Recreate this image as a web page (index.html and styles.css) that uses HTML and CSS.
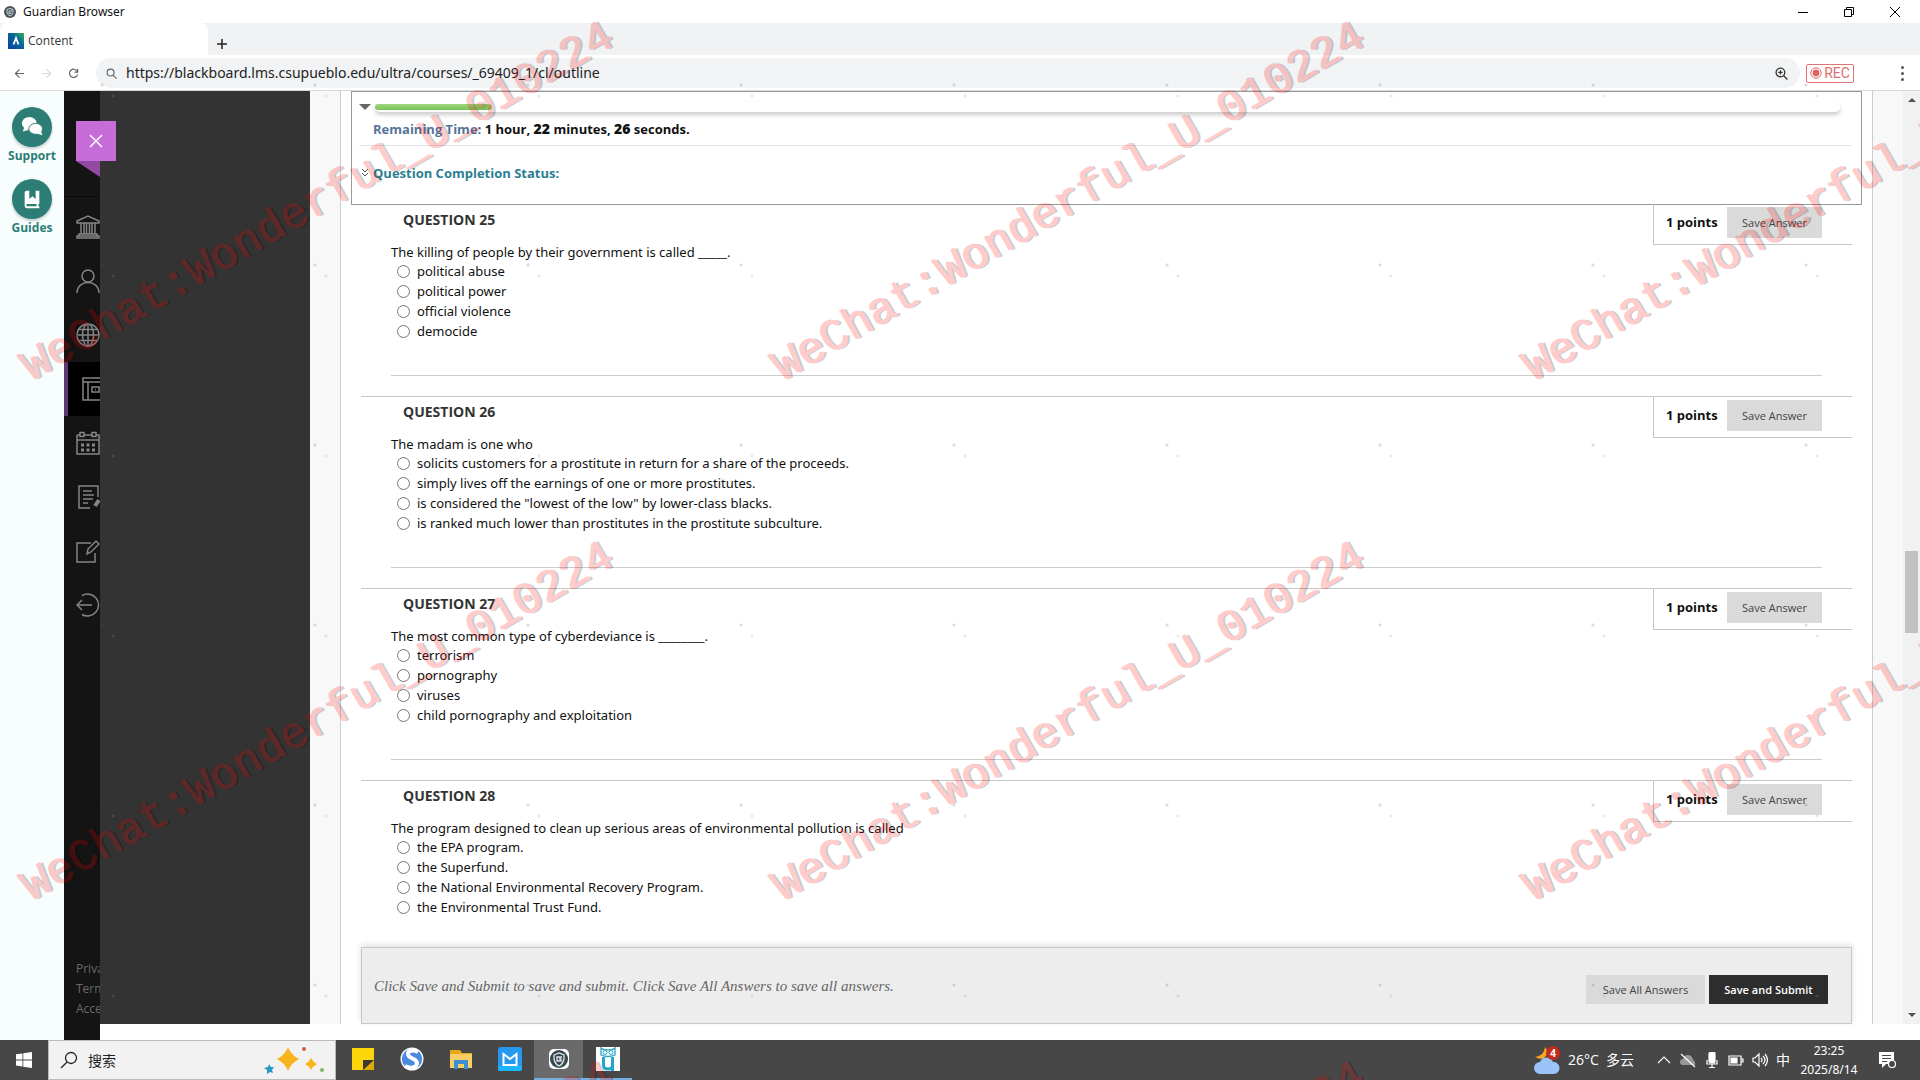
FILE: index.html
```html
<!DOCTYPE html>
<html lang="en">
<head>
<meta charset="utf-8">
<title>Guardian Browser</title>
<link rel="stylesheet" href="styles.css">
</head>
<body>
<header class="titlebar">
  <svg class="app-icon" viewBox="0 0 12 12"><circle cx="6" cy="6" r="6" fill="#46545c"/><path d="M3 3.500l3-1 3 1v3Q8.500 9 6 10 3.500 9 3 6.500zM8 5H5v2.500h2V6.500" fill="none" stroke="#cfd8dc" stroke-width="1"/></svg>
  <span class="app-name">Guardian Browser</span>
  <div class="window-controls">
    <button aria-label="Minimize"><svg viewBox="0 0 12 12"><path d="M1 6.500h10"/></svg></button>
    <button aria-label="Restore"><svg viewBox="0 0 12 12"><path d="M1.500 3.500h7v7h-7zM3.500 3.500v-2h7v7h-2"/></svg></button>
    <button aria-label="Close"><svg viewBox="0 0 12 12"><path d="M1 1l10 10M11 1L1 11"/></svg></button>
  </div>
</header>
<div class="tabstrip">
  <div class="tab">
    <svg class="favicon" viewBox="0 0 16 16"><defs><linearGradient id="fav" x1="0" y1="1" x2="1" y2="0"><stop offset="0" stop-color="#0b3fa0"/><stop offset=".6" stop-color="#06699a"/><stop offset="1" stop-color="#3bb54a"/></linearGradient></defs><path fill="url(#fav)" d="M0 0h16v16H0z"/><path d="M5.500 11.500L8 5l2.500 6.500" fill="none" stroke="#fff" stroke-width="1.800"/></svg>
    <span>Content</span>
  </div>
  <button class="new-tab" aria-label="New tab"><svg viewBox="0 0 12 12"><path d="M6 1v10M1 6h10"/></svg></button>
</div>
<nav class="toolbar" aria-label="Browser">
  <button class="tool" aria-label="Back"><svg viewBox="0 0 12 12"><path d="M11 6H1.500M6 1.500L1.500 6 6 10.500"/></svg></button>
  <button class="tool disabled" aria-label="Forward"><svg viewBox="0 0 12 12"><path d="M1 6h9.500M6 1.500L10.500 6 6 10.500"/></svg></button>
  <button class="tool" aria-label="Reload"><svg viewBox="0 0 12 12"><path d="M10 3.500A4.500 4.500 0 1 0 10.500 7M10.500 1v3.500H7"/></svg></button>
  <div class="address">
    <svg viewBox="0 0 12 12"><circle cx="5" cy="5" r="3.800"/><path d="M8 8l3.500 3.500"/></svg>
    <input type="text" aria-label="Address" value="https://blackboard.lms.csupueblo.edu/ultra/courses/_69409_1/cl/outline">
    <svg class="zoomed" viewBox="0 0 12 12"><circle cx="5" cy="5" r="4"/><path d="M8 8l3.500 3.500M5 3v4M3 5h4"/></svg>
  </div>
  <button class="rec"><svg viewBox="0 0 12 12"><circle cx="6" cy="6" r="5.200" fill="none" stroke="#e06c6c"/><circle cx="6" cy="6" r="3.400" fill="#dd6262"/></svg>REC</button>
  <button class="more" aria-label="Menu"><i></i><i></i><i></i></button>
</nav>
<div class="workspace">
  <aside class="help">
    <a href="#support"><span class="disc"><svg viewBox="0 0 24 24"><ellipse cx="9" cy="8" rx="8" ry="7"/><path d="M2 17l2-6 5 4z"/><ellipse cx="16" cy="14" rx="7.500" ry="6" stroke="#2b7d76"/><path d="M17 19l6.500 2-2-5z"/></svg></span>Support</a>
    <a href="#guides"><span class="disc"><svg viewBox="0 0 24 24"><path fill-rule="evenodd" d="M6 3h3v9l3.500-3 3.500 3V3h4v14.500h-1V20h1v2H7a3 3 0 0 1-3-3V5a2 2 0 0 1 2-2zM7 17.500a1.200 1.200 0 0 0 0 2.500h10v-2.500z"/></svg></span>Guides</a>
  </aside>
  <nav class="rail" aria-label="Main">
    <div class="rail-items">
      <a href="#institution" aria-label="Institution"><svg viewBox="0 0 24 24"><path d="M1 6l11-5 11 5v2H1zM3 19h18v2H3zM1 21h22v2H1zM5 8v11M8 8v11M10.500 8v11M13.500 8v11M16 8v11M19 8v11"/></svg></a>
      <a href="#profile" aria-label="Profile"><svg viewBox="0 0 24 24"><circle cx="12" cy="7" r="6"/><path d="M1 24C1 10 23 10 23 24"/></svg></a>
      <a href="#activity" aria-label="Activity"><svg viewBox="0 0 24 24"><circle cx="12" cy="12" r="11"/><ellipse cx="12" cy="12" rx="5.500" ry="11"/><path d="M12 1v22M1 12h22M3 6.500h18M3 17.500h18"/></svg></a>
      <a href="#courses" class="current" aria-label="Courses"><svg viewBox="0 0 24 24"><path d="M1 1h22v22H1zM1 5h22M6 5v18M10 10h7v5h-7zM13 12.500h1"/></svg></a>
      <a href="#calendar" aria-label="Calendar"><svg viewBox="0 0 24 24"><path d="M1 4h3M8 4h8M20 4h3v19H1V4M1 9h22M4 1.500h4v4H4zM16 1.500h4v4h-4z"/><path d="M5 14h14M5 19h14" stroke-width="3" stroke-dasharray="3 2.500"/></svg></a>
      <a href="#grades" aria-label="Grades"><svg viewBox="0 0 24 24"><path d="M14 23H3V1h19v11M7 6h9M7 10h11M7 14h10M7 18h5"/><path d="M19 21l4-6" stroke-width="4"/></svg></a>
      <a href="#tools" aria-label="Tools"><svg viewBox="0 0 24 24"><path d="M15 4H1v19h18v-9M11 15l1-5 8-8 3 3-8 8z"/></svg></a>
      <a href="#signout" aria-label="Sign out"><svg viewBox="0 0 24 24"><path d="M6 2.500a11 11 0 1 1 0 19M16 12H1M6 7l-5 5 5 5"/></svg></a>
    </div>
    <div class="rail-links"><a href="#privacy">Privacy</a><a href="#terms">Terms</a><a href="#accessibility">Accessibility</a></div>
    <button class="panel-close" aria-label="Close panel"><svg viewBox="0 0 14 14"><path d="M1 1l12 12M13 1L1 13"/></svg></button>
    <i class="fold"></i>
  </nav>
  <div class="backdrop"></div>
  <main class="exam">
    <section class="status">
      <div class="progress-row"><i class="caret"></i><div class="track"><div class="fill" style="width:8%"></div></div></div>
      <p class="remaining"><span>Remaining Time:</span> 1 hour, <b>22</b> minutes, <b>26</b> seconds.</p>
      <a class="completion" href="#status"><svg viewBox="0 0 8 10"><path d="M1 1l3 3 3-3M1 5l3 3 3-3"/></svg>Question Completion Status:</a>
    </section>
    <form class="questions">
      <fieldset class="question">
        <div class="points"><strong>1 points</strong><button type="button">Save Answer</button></div>
        <h2>QUESTION 25</h2>
        <p>The killing of people by their government is called _____.</p>
        <label><input type="radio" name="q25">political abuse</label>
        <label><input type="radio" name="q25">political power</label>
        <label><input type="radio" name="q25">official violence</label>
        <label><input type="radio" name="q25">democide</label>
        <hr>
      </fieldset>
      <fieldset class="question">
        <div class="points"><strong>1 points</strong><button type="button">Save Answer</button></div>
        <h2>QUESTION 26</h2>
        <p>The madam is one who</p>
        <label><input type="radio" name="q26">solicits customers for a prostitute in return for a share of the proceeds.</label>
        <label><input type="radio" name="q26">simply lives off the earnings of one or more prostitutes.</label>
        <label><input type="radio" name="q26">is considered the "lowest of the low" by lower-class blacks.</label>
        <label><input type="radio" name="q26">is ranked much lower than prostitutes in the prostitute subculture.</label>
        <hr>
      </fieldset>
      <fieldset class="question">
        <div class="points"><strong>1 points</strong><button type="button">Save Answer</button></div>
        <h2>QUESTION 27</h2>
        <p>The most common type of cyberdeviance is ________.</p>
        <label><input type="radio" name="q27">terrorism</label>
        <label><input type="radio" name="q27">pornography</label>
        <label><input type="radio" name="q27">viruses</label>
        <label><input type="radio" name="q27">child pornography and exploitation</label>
        <hr>
      </fieldset>
      <fieldset class="question">
        <div class="points"><strong>1 points</strong><button type="button">Save Answer</button></div>
        <h2>QUESTION 28</h2>
        <p>The program designed to clean up serious areas of environmental pollution is called</p>
        <label><input type="radio" name="q28">the EPA program.</label>
        <label><input type="radio" name="q28">the Superfund.</label>
        <label><input type="radio" name="q28">the National Environmental Recovery Program.</label>
        <label><input type="radio" name="q28">the Environmental Trust Fund.</label>
      </fieldset>
      <div class="submit-bar">
        <em>Click Save and Submit to save and submit. Click Save All Answers to save all answers.</em>
        <button type="button">Save All Answers</button>
        <button type="button" class="primary">Save and Submit</button>
      </div>
    </form>
  </main>
  <div class="scrollbar"><i class="up"></i><div class="groove"><div class="thumb"></div></div><i class="down"></i></div>
</div>
<footer class="taskbar">
  <button class="start" aria-label="Start"><svg viewBox="0 0 16 16"><path fill="#fff" d="M0 2.300l6.500-.9v6.100H0zM7.300 1.300L16 0v7.500H7.300zM0 8.400h6.500v6.100L0 13.600zM7.300 8.400H16V16l-8.700-1.300z"/></svg></button>
  <div class="search">
    <svg class="lens" viewBox="0 0 18 18"><circle cx="11" cy="7" r="5.500"/><path d="M7 11l-6 6"/></svg>
    <input type="text" aria-label="搜索" placeholder="搜索">
    <svg class="sparkles" viewBox="0 0 62 28"><path fill="#f7b51b" d="M24 1q3 8 11 12-8 4-11 12-3-8-11-12 8-4 11-12zM47 12q2 4 6 6-4 2-6 6-2-4-6-6 4-2 6-6z"/><path fill="#2899c0" d="M5 18l2 3 3 0-2 3 1 3-3-1-3 2v-4l-3-2 4-1z"/><circle cx="40" cy="3" r="2" fill="#dd5a43"/><circle cx="58" cy="24" r="2" fill="#7fb96a"/></svg>
  </div>
  <div class="apps">
    <button aria-label="Sticky Notes"><svg viewBox="0 0 24 24"><path fill="#fcd60a" d="M1 1h22v12H12v10H1z"/><path fill="#3c3a35" d="M12 13h11L12 23z"/><path fill="#e0ac00" d="M12 23l11-10v10z"/></svg></button>
    <button aria-label="Sogou"><svg viewBox="0 0 24 24"><circle cx="12" cy="12" r="11.500" fill="#fff"/><circle cx="12" cy="12" r="10.200" fill="#4a8be0"/><path d="M18 5C12 2 8 4 8 7c0 5 9 4 9 9 0 5-7 6-12 3" fill="none" stroke="#fff" stroke-width="4"/></svg></button>
    <button aria-label="File Explorer"><svg viewBox="0 0 24 24"><path fill="#e5a91c" d="M1 3h10l2 3h10v5H1z"/><path fill="#f9ce64" d="M1 7h22v14H1z"/><path fill="#3c8fd4" d="M5 13h14v9h-4v-5H9v5H5z"/></svg></button>
    <button aria-label="Mail"><svg viewBox="0 0 24 24"><rect width="24" height="24" rx="3" fill="#2599f0"/><path fill="#1cb5fb" d="M0 19h24v3a2 2 0 0 1-2 2H2a2 2 0 0 1-2-2z"/><path d="M5.500 18V7L12 12l6.500-5v11z" fill="none" stroke="#fff" stroke-width="2"/></svg></button>
    <button class="active" aria-label="Guardian Browser"><svg viewBox="0 0 24 24"><rect x="2" y="2" width="20" height="20" rx="5" fill="#fff"/><circle cx="12" cy="12" r="9" fill="#37474f"/><path d="M7 8l5-2 5 2v4q-1 5-5 7-4-2-5-7zM15 10h-5v4h4v-2h-2" fill="none" stroke="#e3e8ea" stroke-width="1.300"/></svg></button>
    <button class="running" aria-label="Owl"><svg viewBox="0 0 24 24"><path fill="#fff" d="M0 0h24v24H0z"/><g fill="none" stroke="#27a5c6"><path d="M5 1q2 2 7 2t7-2v7q-7 3-14 0z" stroke-width="1.300"/><circle cx="9" cy="5.500" r="2"/><circle cx="15" cy="5.500" r="2"/><path d="M7.500 10v8q0 4 4.500 4t4.500-4v-8" stroke-width="3"/><path d="M16.500 18v6" stroke-width="3"/></g></svg></button>
  </div>
  <div class="tray">
    <svg class="weather" viewBox="0 0 26 28"><path fill="#f6a823" d="M11 1q5 6-1 11-4 2-9-1 9-1 10-10z"/><path fill="#9cc4f8" d="M6 28a6 6 0 0 1 0-12 7 7 0 0 1 13 0 6 6 0 0 1 1 12z"/><circle cx="19" cy="7" r="7" fill="#c42b1c"/><text x="19" y="11" text-anchor="middle" font-size="10" font-weight="700" fill="#fff">4</text></svg>
    <span class="temp">26°C&nbsp; 多云</span>
    <svg viewBox="0 0 16 16"><path d="M2 11l6-6 6 6"/></svg>
    <svg viewBox="0 0 16 16"><path d="M3 13a3 3 0 0 1 0-6q2-6 8-3 2 2 2 4 3 2 2 5z" fill="#999" stroke="none"/><path d="M1 2l14 13"/></svg>
    <svg viewBox="0 0 16 16"><rect x="5" y="0" width="6" height="11" rx="2" fill="#fff"/><path d="M3 8v4h10V8M8 12v4M5 15.500h6"/></svg>
    <svg viewBox="0 0 16 16"><path d="M1 4h12v9H1zM13 7h2v3h-2"/><path fill="#fff" d="M3 6h6v5H3z"/></svg>
    <svg viewBox="0 0 16 16"><path d="M1 6h2l4-4v12l-4-4H1zM9 6q2 2 0 4M11 4q4 4 0 8M13 2q5 6 0 12"/></svg>
    <span class="ime">中</span>
    <time>23:25<br>2025/8/14</time>
    <svg class="notice" viewBox="0 0 18 18"><path fill="#fff" stroke="none" d="M1 1h15v12H8l-4 4v-4H1z"/><path d="M4 4.500h9M4 7.500h9M4 10.500h5" stroke="#474747"/><circle cx="14" cy="13" r="3.500" fill="#474747"/></svg>
  </div>
</footer>
<div class="watermarks" aria-hidden="true">
  <span>WeChat:Wonderful_U_010224</span><span>WeChat:Wonderful_U_010224</span><span>WeChat:Wonderful_U_010224</span>
  <span>WeChat:Wonderful_U_010224</span><span>WeChat:Wonderful_U_010224</span><span>WeChat:Wonderful_U_010224</span>
  <span>WeChat:Wonderful_U_010224</span><span>WeChat:Wonderful_U_010224</span><span>WeChat:Wonderful_U_010224</span>
</div>
</body>
</html>
```
FILE: styles.css
```css
* { box-sizing: border-box; }
body {
  margin: 0;
  height: 100vh;
  display: flex;
  flex-direction: column;
  position: relative;
  overflow: hidden;
  background: #fff;
  color: #111;
  font: 13px/20px "Open Sans", "Noto Sans CJK SC", sans-serif;
}
button { font: inherit; color: inherit; border: 0; background: none; padding: 0; }
a { color: inherit; text-decoration: none; }
svg { display: block; flex: none; fill: none; stroke-linecap: butt; }
p, h2 { margin: 0; }

/* browser chrome */
.titlebar { height: 23px; flex: none; display: flex; align-items: center; padding-left: 4px; gap: 7px; font-size: 12px; }
.app-name { font-family: "Noto Sans", sans-serif; }
.app-icon { width: 12px; height: 12px; }
.window-controls { margin-left: auto; display: flex; padding-right: 2px; }
.window-controls button { width: 46px; height: 20px; display: grid; place-items: center; }
.window-controls svg { width: 12px; height: 12px; stroke: #000; }
.tabstrip { height: 32px; flex: none; background: #f1f2f4; display: flex; align-items: center; }
.tab { width: 208px; height: 32px; background: #fff; border-radius: 8px 8px 0 0; display: flex; align-items: center; gap: 4px; padding: 3px 8px 0; font-size: 12px; color: #333; }
.favicon { width: 16px; height: 16px; }
.new-tab { width: 28px; height: 22px; display: grid; place-items: center; align-self: flex-end; }
.new-tab svg { width: 12px; height: 12px; stroke: #222; stroke-width: 1.500; }
.toolbar { height: 36px; flex: none; display: flex; align-items: center; padding: 1px 10px 0 6px; border-bottom: 1px solid #d8d9db; }
.tool { width: 27px; height: 24px; display: grid; place-items: center; }
.tool svg { width: 11px; height: 11px; stroke: #5f6368; stroke-width: 1.300; }
.disabled svg { stroke: #d8d8d8; }
.address { flex: 1; height: 30px; margin-left: 9px; padding: 0 12px 0 10px; border-radius: 15px; background: #f1f3f4; display: flex; align-items: center; gap: 9px; }
.address svg { width: 11px; height: 11px; stroke: #5f6368; stroke-width: 1.200; }
.address .zoomed { width: 13px; height: 13px; stroke: #333; }
.address input { flex: 1; border: 0; padding: 0; background: none; outline: 0; font: 14px/20px "Noto Sans", sans-serif; color: #222; }
.rec { margin: 0 41px 0 6px; width: 48px; height: 19px; border: 1px solid #df7474; border-radius: 2px; display: flex; align-items: center; justify-content: center; gap: 2px; color: #dc7070; font: 14px/16px Roboto, sans-serif; }
.rec svg { width: 12px; height: 12px; }
.more { width: 15px; display: grid; gap: 3px; justify-items: center; }
.more i { width: 3px; height: 3px; border-radius: 50%; background: #555; }

/* page columns */
.workspace { flex: 1; min-height: 0; display: flex; }
.help { width: 64px; flex: none; background: #f8fdfe; padding-top: 16px; display: flex; flex-direction: column; gap: 14px; }
.help a { display: flex; flex-direction: column; align-items: center; color: #2b7d76; font-weight: 700; font-size: 12px; line-height: 18px; }
.disc { width: 40px; height: 40px; border-radius: 50%; background: #2b7d76; display: grid; place-items: center; box-shadow: 0 2px 3px #0003; }
.disc svg { width: 22px; height: 22px; fill: #fff; }
.rail { width: 36px; flex: none; background: #141414; position: relative; display: flex; flex-direction: column; justify-content: space-between; }
.rail-items { margin-top: 105px; padding-top: 3px; border-top: 1px solid #0b0b0b; overflow: hidden; }
.rail-items a { height: 54px; padding-left: 12px; display: flex; align-items: center; }
.rail-items svg { width: 24px; height: 24px; stroke: #858585; stroke-width: 1.500; }
.rail-items .current { background: #000; border-left: 4px solid #5e3971; padding-left: 14px; }
.rail-links { overflow: hidden; padding: 0 0 21px 12px; display: flex; flex-direction: column; color: #6a6a6a; font-size: 12px; }
.panel-close { position: absolute; left: 12px; top: 30px; width: 40px; height: 40px; background: #c66dd9; display: grid; place-items: center; z-index: 1; }
.panel-close svg { width: 14px; height: 14px; stroke: #fff; stroke-width: 1.500; }
.fold { position: absolute; left: 12px; top: 70px; width: 24px; height: 16px; background: #924aa3; clip-path: polygon(0 0, 100% 0, 100% 100%); }
.backdrop { width: 210px; flex: none; background: #333; margin-bottom: 16px; }
.exam { flex: 1; min-width: 0; margin-bottom: 16px; background: #fff; border: solid #f8f8f8; border-width: 0 30px; box-shadow: inset 1px 0 #ccc, inset -1px 0 #ccc; padding: 0 11px; display: flex; flex-direction: column; }

/* timer panel */
.status { height: 114px; border: 1px solid #999; padding: 0 9px 0 7px; background: #fff; }
.progress-row { height: 27px; display: flex; align-items: center; gap: 4px; padding: 3px 12px 0 0; }
.caret { border: solid transparent; border-width: 6px 6px 0; border-top-color: #666; }
.track { flex: 1; height: 10px; border-radius: 5px; padding: 2px 0; box-shadow: 0 3px 4px #0003; }
.fill { height: 6px; border-radius: 3px; background: linear-gradient(#a0d880, #79c255); }
.remaining { padding: 0 0 6px 14px; border-bottom: 1px solid #e5e5e5; font-weight: 700; }
.remaining span { color: #56739a; }
.remaining b { font-size: 14px; }
.completion { display: flex; align-items: center; gap: 4px; padding: 17px 0 0 2px; color: #2c7f93; font-weight: 700; }
.completion svg { width: 8px; height: 10px; stroke: #555; }

/* questions */
.questions { padding: 0 10px; flex: 1; display: flex; flex-direction: column; }
.question { position: relative; margin: 0; border: 0; min-width: 0; border-top: 1px solid #c6c6c6; padding: 5px 30px 20px; }
.question:first-child { border-top: 0; }
.question:first-child .points { top: -1px; }
.question h2 { font: 700 14px/20px "Open Sans", sans-serif; color: #333; padding-left: 12px; margin-bottom: 13px; }
.question p, .question label { font-family: "Noto Sans", sans-serif; }
.question p { line-height: 18px; }
.question label { display: flex; align-items: center; gap: 7px; height: 20px; padding-left: 6px; }
.question input { appearance: none; width: 13px; height: 13px; margin: 0; border: 1px solid #767676; border-radius: 50%; background: #fff; }
.question hr { margin: 34px 0 0; border: 0; border-top: 1px solid #ccc; }
.points { position: absolute; right: 0; top: 0; width: 199px; height: 41px; padding: 3px 30px 0 12px; border: solid #c6c6c6; border-width: 0 0 1px 1px; display: flex; justify-content: space-between; align-items: flex-start; line-height: 30px; }
.points button { width: 95px; height: 31px; background: #dadada; font-size: 11px; color: #444; }
.submit-bar { margin-top: auto; height: 77px; border: 1px solid #c8c8c8; background: #ededed; box-shadow: 0 -2px 6px #0002; display: flex; align-items: center; gap: 4px; padding: 8px 23px 0 12px; }
.submit-bar em { flex: 1; font: italic 15px/20px "Liberation Serif", serif; color: #666; padding-bottom: 8px; }
.submit-bar button { width: 119px; height: 29px; background: #dadada; font-size: 11px; color: #444; }
.submit-bar .primary { background: #2d2d2d; color: #fff; font-weight: 600; }

.scrollbar { width: 17px; flex: none; background: #f1f1f1; margin-bottom: 16px; padding: 7px 0; display: flex; flex-direction: column; align-items: center; }
.up { border: 4px solid transparent; border-top: 0; border-bottom-color: #505050; }
.down { border: 4px solid transparent; border-bottom: 0; border-top-color: #505050; }
.groove { flex: 1; width: 13px; display: grid; grid-template-rows: 449fr 82fr 380fr; }
.thumb { grid-row: 2; background: #c1c1c1; }

/* taskbar */
.taskbar { height: 40px; flex: none; background: #474747; color: #fff; display: flex; }
.start { width: 48px; display: grid; place-items: center; }
.start svg { width: 16px; height: 16px; }
.search { width: 288px; background: #f2f2f2; border: 1px solid #bbb; display: flex; align-items: center; padding: 0 9px 0 11px; gap: 10px; }
.lens { width: 18px; height: 18px; stroke: #222; stroke-width: 1.300; }
.search input { flex: 1; min-width: 0; border: 0; background: none; padding: 0; font: 14px/20px "Noto Sans CJK SC", sans-serif; }
.search input::placeholder { color: #222; }
.sparkles { width: 62px; height: 28px; }
.apps { display: flex; padding-left: 2px; }
.apps button { width: 49px; display: grid; place-items: center; border-bottom: 2px solid transparent; }
.apps svg { width: 24px; height: 24px; }
.apps .active { background: #6a6a6a; border-color: #76aede; }
.apps .running { border-color: #76aede; }
.tray { margin-left: auto; display: flex; align-items: center; gap: 8px; padding-right: 24px; font-size: 14px; }
.tray svg { width: 16px; height: 16px; stroke: #fff; stroke-width: 1.200; }
.tray .weather { width: 26px; height: 28px; stroke: none; }
.temp { padding-right: 14px; }
.tray time { font: 12px/19px "Noto Sans", sans-serif; text-align: center; width: 62px; margin: 0 10px 0 0; }
.tray .notice { width: 18px; height: 18px; }

/* tiled diagonal watermark with its speckle grid */
.watermarks {
  position: absolute; inset: 0; overflow: hidden; pointer-events: none; z-index: 5; opacity: .2;
  display: grid; grid-template-columns: repeat(3, 751px); grid-template-rows: repeat(3, 520px);
  background: radial-gradient(circle at 102px 85px, #555 1px, transparent 2px) 0 0 / 213px 180px,
    radial-gradient(circle at 113px 96px, #999 1px, transparent 2px) 0 0 / 213px 180px;
}
.watermarks span {
  width: 675px; height: 54px; margin: 176px 0 0 -20px;
  transform: rotate(-30deg);
  font: 45px/54px "Liberation Mono", monospace;
  color: #f00; text-shadow: 1px 1px #f00, 3px 2px #000;
}
```
